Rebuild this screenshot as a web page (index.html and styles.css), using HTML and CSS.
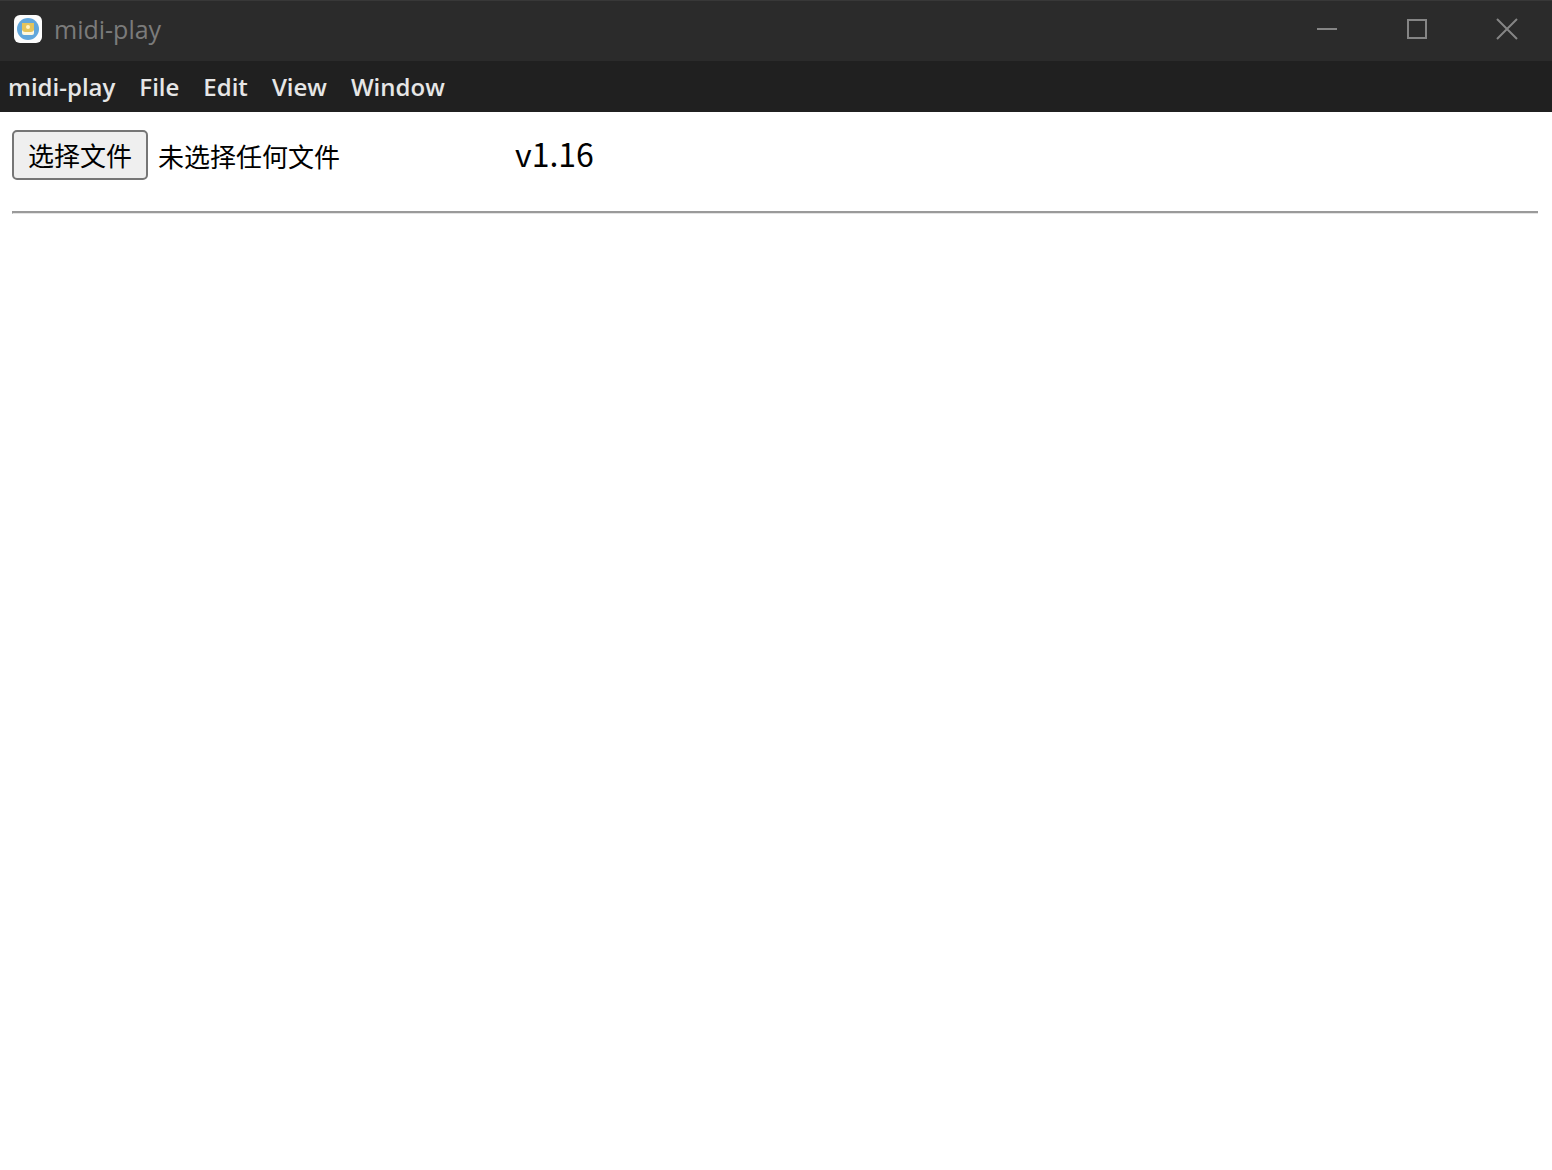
FILE: index.html
```
<!DOCTYPE html>
<html lang="zh-CN">
  <head>
    <meta charset="UTF-8" />
    <meta name="viewport" content="width=device-width, initial-scale=1.0" />
    <title>midi-play</title>
    <link rel="stylesheet" href="styles.css">
  </head>

  <body>
    <header class="titlebar">
      <svg class="logo" viewBox="0 0 28 28" aria-hidden="true">
        <rect width="28" height="28" rx="6" fill="#fdfdfd" />
        <circle cx="14" cy="14" r="11" fill="#62a7dc" />
        <rect x="8" y="9" width="12" height="11" rx="2" fill="#fff8df" />
        <path d="M8 8h12v7q-1 2-3 2h-6q-2 0-3-2z" fill="#e4c45c" />
        <circle cx="14" cy="12" r="2" fill="#fff4c4" />
      </svg>
      <span class="title">midi-play</span>
      <div class="controls">
        <button class="control" aria-label="Minimize">
          <svg viewBox="0 0 22 22"><path d="M1 11h20" /></svg>
        </button>
        <button class="control" aria-label="Maximize">
          <svg viewBox="0 0 22 22"><path d="M2 2h18v18h-18z" /></svg>
        </button>
        <button class="control" aria-label="Close">
          <svg viewBox="0 0 22 22"><path d="M1 1l20 20M21 1l-20 20" /></svg>
        </button>
      </div>
    </header>

    <nav class="menu">
      <button>midi-play</button>
      <button>File</button>
      <button>Edit</button>
      <button>View</button>
      <button>Window</button>
    </nav>

    <main>
      <div class="toolbar">
        <div class="picker">
          <button id="choose">选择文件</button>
          <label for="file" id="name">未选择任何文件</label>
          <input type="file" id="file" accept=".mid,.midi" hidden />
        </div>
        <span class="version">v1.16</span>
      </div>
      <hr />
    </main>

    <script>
      let file = document.getElementById("file");

      document.getElementById("choose").addEventListener("click", () => {
        file.click();
      });

      // show the name of the chosen file
      file.addEventListener("change", () => {
        document.getElementById("name").innerText = file.files.length
          ? file.files[0].name
          : "未选择任何文件";
      });
    </script>
  </body>
</html>
```
FILE: styles.css
```
body {
  margin: 0;
  background-color: #fff;
  color: #000;
  font-family: "Noto Sans CJK SC", sans-serif;
  font-size: 26px;
}

button {
  font: inherit;
}

.titlebar {
  display: flex;
  align-items: center;
  box-sizing: border-box;
  height: 61px;
  padding: 0 0 4px 14px;
  border-top: 1px solid #383838;
  background-color: #2b2b2b;
}

.logo {
  width: 28px;
  height: 28px;
  margin-right: 12px;
}

.title {
  color: #7b7b7b;
  font-family: "Open Sans", sans-serif;
  font-size: 25px;
}

.controls {
  display: flex;
  align-self: stretch;
  margin-left: auto;
}

.control {
  display: flex;
  align-items: center;
  justify-content: center;
  width: 90px;
  padding: 0;
  border: none;
  background: none;
}

.control svg {
  width: 22px;
  height: 22px;
  fill: none;
  stroke: #858585;
  stroke-width: 2;
}

.menu {
  display: flex;
  align-items: center;
  gap: 24px;
  height: 51px;
  padding-left: 8px;
  background-color: #202020;
}

.menu button {
  padding: 0;
  border: none;
  background: none;
  color: #e6e6e6;
  font-family: "Open Sans", sans-serif;
  font-size: 24px;
  font-weight: 600;
}

main {
  padding: 18px 14px 0 12px;
}

.toolbar {
  display: flex;
  align-items: center;
  height: 50px;
}

.picker {
  display: flex;
  align-items: center;
  gap: 10px;
  width: 503px;
}

.picker button {
  box-sizing: border-box;
  height: 50px;
  padding: 0 14px;
  border: 2px solid #767676;
  border-radius: 5px;
  background-color: #efefef;
  color: #000;
  line-height: 46px;
}

.version {
  padding-bottom: 4px;
  font-size: 32px;
}

hr {
  height: 0;
  margin: 31px 0 0;
  border: solid #9a9a9a;
  border-width: 2px 0 1px 1px;
  border-bottom-color: #e4e4e4;
}
```
